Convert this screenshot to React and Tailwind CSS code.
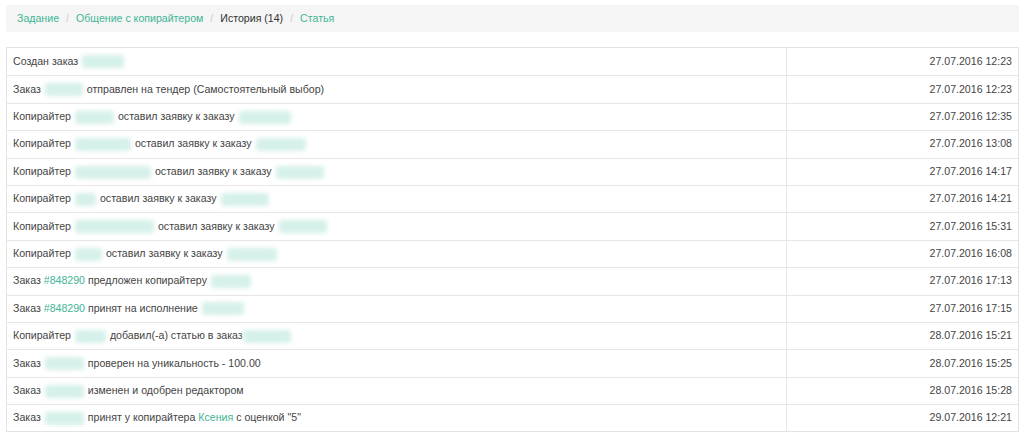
import React from 'react';

// hidden ids / names are shown as soft teal smudges
function Blur({ w, ml = 4, mr = 4 }) {
  return (
    <span
      className="inline-block h-[13px] align-middle rounded-[3px] bg-[#d6f0ea] blur-[2px]"
      style={{ width: w, marginLeft: ml, marginRight: mr }}
    />
  );
}

function Link({ children }) {
  return <a className="text-[#3fb597] cursor-pointer">{children}</a>;
}

const rows = [
  { date: '27.07.2016 12:23', body: <>Создан заказ<Blur w={42} /></> },
  { date: '27.07.2016 12:23', body: <>Заказ<Blur w={38} />отправлен на тендер (Самостоятельный выбор)</> },
  { date: '27.07.2016 12:35', body: <>Копирайтер<Blur w={39} />оставил заявку к заказу<Blur w={52} /></> },
  { date: '27.07.2016 13:08', body: <>Копирайтер<Blur w={56} />оставил заявку к заказу<Blur w={50} /></> },
  { date: '27.07.2016 14:17', body: <>Копирайтер<Blur w={76} />оставил заявку к заказу<Blur w={48} /></> },
  { date: '27.07.2016 14:21', body: <>Копирайтер<Blur w={21} />оставил заявку к заказу<Blur w={48} /></> },
  { date: '27.07.2016 15:31', body: <>Копирайтер<Blur w={79} />оставил заявку к заказу<Blur w={48} /></> },
  { date: '27.07.2016 16:08', body: <>Копирайтер<Blur w={27} />оставил заявку к заказу<Blur w={50} /></> },
  { date: '27.07.2016 17:13', body: <>Заказ <Link>#848290</Link> предложен копирайтеру<Blur w={40} /></> },
  { date: '27.07.2016 17:15', body: <>Заказ <Link>#848290</Link> принят на исполнение<Blur w={42} /></> },
  { date: '28.07.2016 15:21', body: <>Копирайтер<Blur w={31} />добавил(-а) статью в заказ<Blur w={48} ml={0} /></> },
  { date: '28.07.2016 15:25', body: <>Заказ<Blur w={39} />проверен на уникальность - 100.00</> },
  { date: '28.07.2016 15:28', body: <>Заказ<Blur w={39} />изменен и одобрен редактором</> },
  { date: '29.07.2016 12:21', body: <>Заказ<Blur w={39} />принят у копирайтера <Link>Ксения</Link> с оценкой "5"</> },
];

export default function App() {
  return (
    <div className="min-h-screen bg-white px-[6px] pt-[5px] text-[10.6px] text-[#444] font-['Liberation_Sans',Arial,sans-serif]">
      <div className="h-[27px] w-[1013px] rounded-[3px] bg-[#f5f5f5] px-[11px] flex items-center">
        <Link>Задание</Link>
        <span className="px-[7px] text-[#ccc]">/</span>
        <Link>Общение с копирайтером</Link>
        <span className="px-[7px] text-[#ccc]">/</span>
        <span className="text-[#333]">История (14)</span>
        <span className="px-[7px] text-[#ccc]">/</span>
        <Link>Статья</Link>
      </div>

      <div className="mt-[15px] w-[1013px] border border-[#e3e3e3]">
        {rows.map((r, i) => (
          <div
            key={i}
            className={`flex h-[27.4px] ${i > 0 ? 'border-t border-[#e6e6e6]' : ''}`}
          >
            <div className="flex-1 flex items-center px-[6px] whitespace-nowrap border-r border-[#e6e6e6]">
              <span>{r.body}</span>
            </div>
            <div className="w-[231px] flex items-center justify-end px-[6px]">{r.date}</div>
          </div>
        ))}
      </div>
    </div>
  );
}
